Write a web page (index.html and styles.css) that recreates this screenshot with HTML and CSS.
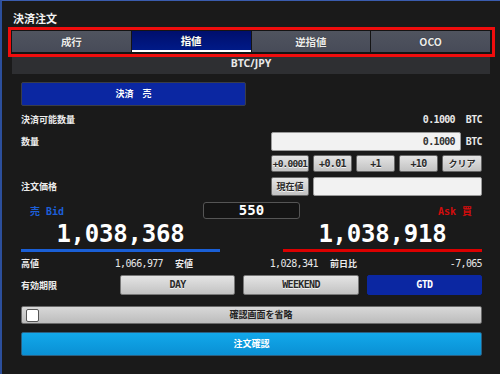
FILE: index.html
```html
<!DOCTYPE html>
<html lang="ja">
<head>
<meta charset="utf-8">
<title>決済注文</title>
<link rel="stylesheet" href="styles.css">
</head>
<body>
<div class="panel">
  <div class="title">決済注文</div>
  <div class="tabs-frame">
    <div class="tab">成行</div>
    <div class="tab active">指値</div>
    <div class="tab">逆指値</div>
    <div class="tab">OCO</div>
  </div>
  <div class="pair">BTC/JPY</div>

  <div class="content">
    <div class="side-btn">決済　売</div>

    <div class="row row-avail">
      <div class="label">決済可能数量</div>
      <div class="right qty-grid">
        <div class="value">0.1000</div>
        <div class="unit">BTC</div>
      </div>
    </div>

    <div class="row row-qty">
      <div class="label">数量</div>
      <div class="right qty-grid">
        <div class="input num">0.1000</div>
        <div class="unit">BTC</div>
      </div>
    </div>

    <div class="row row-steps">
      <div class="label"></div>
      <div class="right steps">
        <div class="btn tight">+0.0001</div>
        <div class="btn">+0.01</div>
        <div class="btn">+1</div>
        <div class="btn">+10</div>
        <div class="btn jp">クリア</div>
      </div>
    </div>

    <div class="row row-price">
      <div class="label">注文価格</div>
      <div class="right price-grid">
        <div class="btn jp">現在値</div>
        <div class="input"></div>
      </div>
    </div>

    <div class="quote-labels">
      <div class="bid-label">売 Bid</div>
      <div class="spread">550</div>
      <div class="ask-label">Ask 買</div>
    </div>

    <div class="quotes">
      <div class="quote bid">1,038,368</div>
      <div class="quote ask">1,038,918</div>
    </div>

    <div class="stats">
      <div class="stat"><span class="label">高値</span><span class="sv">1,066,977</span></div>
      <div class="stat"><span class="label">安値</span><span class="sv">1,028,341</span></div>
      <div class="stat"><span class="label">前日比</span><span class="sv">-7,065</span></div>
    </div>

    <div class="row row-expiry">
      <div class="label expiry-label">有効期限</div>
      <div class="expiry">
        <div class="btn">DAY</div>
        <div class="btn">WEEKEND</div>
        <div class="btn selected">GTD</div>
      </div>
    </div>

    <div class="skip">
      <span class="check"></span>
      <span class="skip-text">確認画面を省略</span>
    </div>

    <div class="confirm">注文確認</div>
  </div>
</div>
</body>
</html>
```
FILE: styles.css
```css
* { box-sizing: border-box; margin: 0; padding: 0; }
html, body { width: 500px; height: 374px; overflow: hidden; }
body {
  background: #1a1a1a;
  color: #e8e8e8;
  font-family: "Noto Sans CJK JP", "Noto Sans", sans-serif;
}
.panel {
  height: 374px;
  border-top: 1px solid #3a5cae;
  border-left: 2px solid #2c4f9c;
}
.title {
  height: 26px;
  padding: 8px 0 0 11px;
  font-size: 11px;
  font-weight: 700;
  line-height: 18px;
  color: #f2f2f2;
}
.tabs-frame {
  margin-left: 6px;
  width: 487px;
  border: 3px solid #f00d0d;
  padding: 1px 2px 2px 1px;
  display: flex;
  gap: 1px;
  background: #141414;
}
.tab {
  flex: 1;
  height: 21px;
  background: linear-gradient(#50545f, #474b58);
  color: #ececec;
  font-size: 10.5px;
  font-weight: 700;
  line-height: 21px;
  text-align: center;
  text-shadow: 0 0 1px #222;
}
.tab.active {
  background: linear-gradient(#000f6c, #001a88);
  border-bottom: 2px solid #ffffff;
  line-height: 20px;
  color: #fff;
}
.pair {
  margin-left: 10px;
  width: 478px;
  height: 17px;
  background: #2e2f32;
  text-align: center;
  font-family: "Noto Sans", sans-serif;
  font-size: 10.5px;
  font-weight: 700;
  line-height: 13px;
  color: #e8e8e8;
}
.content { padding: 0 18px 0 19px; }
.side-btn {
  margin-top: 8px;
  width: 225px;
  height: 24px;
  background: #0b27a2;
  border: 1px solid #3a3d48;
  border-radius: 2px;
  color: #fff;
  font-size: 9px;
  font-weight: 700;
  line-height: 22px;
  text-align: center;
}
.row { display: flex; align-items: center; }
.label {
  font-size: 9px;
  font-weight: 700;
  color: #ececec;
  white-space: nowrap;
}
.row > .label { width: 250px; }
.right { width: 211px; }
.num, .value, .unit, .btn, .sv, .spread, .quote, .bid-label, .ask-label {
  font-family: "DejaVu Sans Mono", monospace;
}
.qty-grid { display: grid; grid-template-columns: 190px 1fr; align-items: center; }
.value {
  text-align: right;
  padding-right: 6px;
  font-size: 10px;
  font-weight: 700;
  letter-spacing: -0.65px;
  color: #e8e8e8;
}
.unit {
  text-align: right;
  font-size: 10px;
  font-weight: 700;
  letter-spacing: -0.6px;
  color: #e8e8e8;
}
.row-avail { margin-top: 4px; height: 19px; }
.row-qty { margin-top: 3px; height: 19px; }
.input {
  height: 19px;
  background: #f2f2f2;
  border: 1px solid #9a9a9a;
  border-radius: 2px;
}
.input.num {
  text-align: right;
  padding-right: 5px;
  font-size: 10px;
  font-weight: 700;
  letter-spacing: -0.65px;
  line-height: 17px;
  color: #333;
}
.row-steps { margin-top: 4px; height: 17px; }
.steps {
  display: grid;
  grid-template-columns: 38px 39px 39px 39px 40px;
  column-gap: 4px;
  height: 17px;
}
.btn {
  background: linear-gradient(#e4e4e4, #c2c2c2);
  border: 1px solid #666;
  border-radius: 2px;
  color: #2a2a2a;
  font-size: 10px;
  font-weight: 700;
  letter-spacing: -0.65px;
  text-align: center;
  line-height: 15px;
  text-shadow: 0 1px 0 #f4f4f4;
  white-space: nowrap;
  overflow: hidden;
}
.btn.tight { font-size: 9.5px; letter-spacing: -0.8px; }
.btn.jp {
  font-family: "Noto Sans CJK JP", sans-serif;
  font-size: 9px;
  letter-spacing: 0;
}
.row-price { margin-top: 5px; height: 19px; }
.price-grid {
  display: grid;
  grid-template-columns: 38px 1fr;
  column-gap: 4px;
  height: 19px;
}
.price-grid .btn { line-height: 17px; }
.quote-labels {
  margin-top: 6px;
  display: grid;
  grid-template-columns: 1fr 97px 1fr;
  align-items: center;
  height: 17px;
}
.bid-label {
  padding-left: 9px;
  color: #1d5fd8;
  font-size: 10px;
  font-weight: 700;
}
.ask-label {
  text-align: right;
  padding-right: 10px;
  color: #d40c0c;
  font-size: 10px;
  font-weight: 700;
}
.bid-label, .ask-label { font-family: "DejaVu Sans Mono", "Noto Sans CJK JP", monospace; }
.spread {
  height: 17px;
  border: 1px solid #555;
  border-radius: 3px;
  background: #141414;
  text-align: center;
  color: #fff;
  font-size: 14px;
  font-weight: 700;
  line-height: 15px;
}
.quotes { display: flex; justify-content: space-between; }
.quote {
  width: 199px;
  height: 33px;
  text-align: center;
  color: #fff;
  font-size: 24px;
  font-weight: 700;
  letter-spacing: -0.2px;
  line-height: 30px;
}
.quote.bid { border-bottom: 3px solid #1a5fd6; }
.quote.ask { border-bottom: 3px solid #dc0000; }
.stats {
  margin-top: 4px;
  height: 15px;
  display: grid;
  grid-template-columns: 142px 143px 1fr;
  column-gap: 12px;
  align-items: center;
}
.stat { display: flex; justify-content: space-between; align-items: center; }
.sv {
  font-size: 10px;
  letter-spacing: -0.65px;
  color: #e6e6e6;
}
.row-expiry { margin-top: 4px; height: 20px; }
.row-expiry > .expiry-label { width: 99px; }
.expiry {
  flex: 1;
  display: grid;
  grid-template-columns: repeat(3, 1fr);
  column-gap: 8px;
  height: 20px;
}
.expiry .btn { line-height: 18px; border-color: #777; }
.expiry .btn.selected {
  background: #0b27a2;
  border-color: #0b27a2;
  color: #fff;
  text-shadow: none;
}
.skip {
  margin-top: 11px;
  height: 18px;
  display: flex;
  align-items: center;
  background: linear-gradient(#d8d8d8, #bcbcbc);
  border: 1px solid #6a6a6a;
  border-radius: 2px;
  padding-left: 4px;
}
.check {
  width: 13px;
  height: 13px;
  background: #fff;
  border: 1.5px solid #555;
  border-radius: 2px;
}
.skip-text {
  flex: 1;
  text-align: center;
  padding-left: 2px;
  font-size: 9px;
  font-weight: 700;
  color: #222;
  line-height: 16px;
}
.confirm {
  margin-top: 8px;
  height: 24px;
  background: linear-gradient(#12a8ea, #0a90d4);
  border: 1px solid #2b5f80;
  border-radius: 2px;
  color: #fff;
  font-size: 9px;
  font-weight: 700;
  line-height: 22px;
  text-align: center;
}
```
